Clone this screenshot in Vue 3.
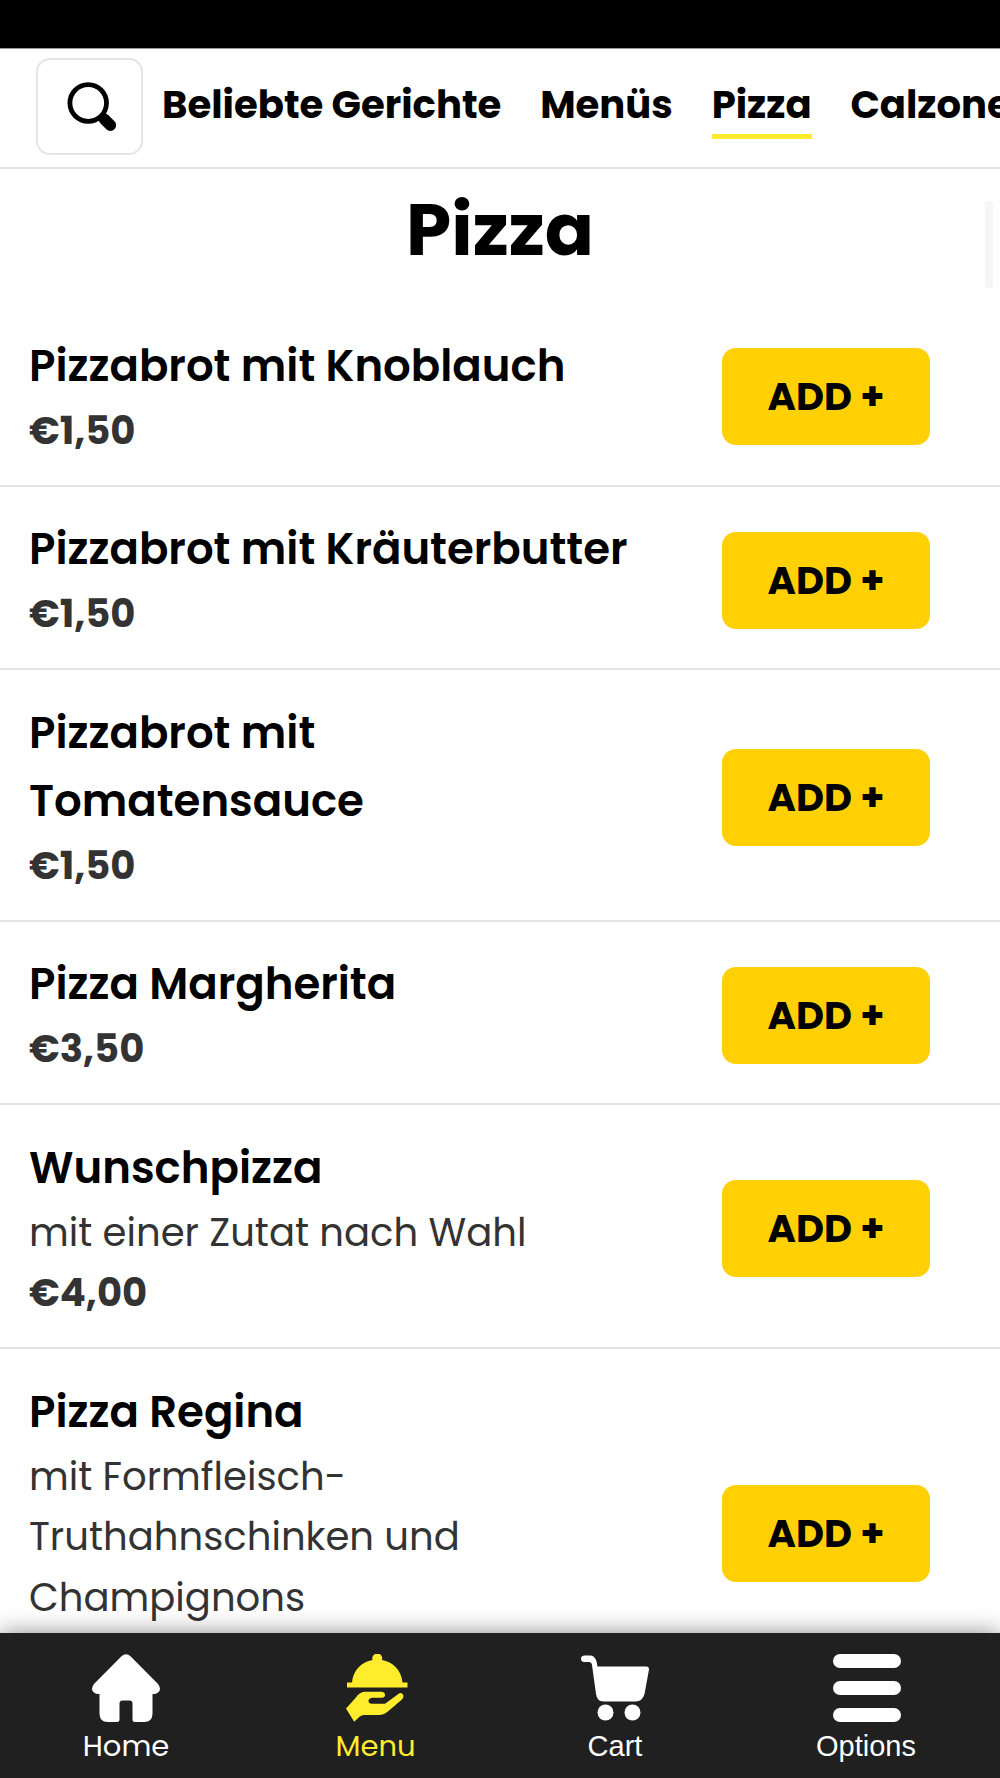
<script setup>

import { ref } from 'vue';

/**
 * The menu categories.
 */
const categories = [
    { id: 'popular', name: 'Beliebte Gerichte' },
    { id: 'menus', name: 'Menüs' },
    { id: 'pizza', name: 'Pizza' },
    { id: 'calzone', name: 'Calzone' },
];

/**
 * The selected category.
 */
const activeCategory = ref('pizza');

/**
 * The dishes of the selected category.
 */
const dishes = [
    { name: 'Pizzabrot mit Knoblauch', price: '€1,50' },
    { name: 'Pizzabrot mit Kräuterbutter', price: '€1,50' },
    { name: 'Pizzabrot mit Tomatensauce', price: '€1,50' },
    { name: 'Pizza Margherita', price: '€3,50' },
    { name: 'Wunschpizza', description: 'mit einer Zutat nach Wahl', price: '€4,00' },
    { name: 'Pizza Regina', description: 'mit Formfleisch-Truthahnschinken und Champignons', price: '€4,50' },
];

/**
 * The number of dishes in the cart.
 */
const cartCount = ref(0);

function add() {
    cartCount.value++;
}

</script>

<template>
    <div class="app">
        <div class="statusBar"></div>

        <header class="header">
            <button class="searchButton" aria-label="Suche">
                <svg width="50" height="50" viewBox="0 0 50 50">
                    <circle cx="21.2" cy="21" r="18.3" fill="none" stroke="#000" stroke-width="4.8" />
                    <path d="M37.2 37L43.4 43.2" stroke="#000" stroke-width="11.5" stroke-linecap="round" />
                </svg>
            </button>
            <nav class="tabs">
                <a v-for="category in categories" :key="category.id" class="tab" :class="{ active: activeCategory === category.id }" @click="activeCategory = category.id">{{ category.name }}</a>
            </nav>
        </header>

        <main class="content">
            <h1>Pizza</h1>
            <div class="scrollThumb"></div>

            <article v-for="dish in dishes" :key="dish.name" class="dish">
                <div class="dishText">
                    <h2>{{ dish.name }}</h2>
                    <p v-if="dish.description">{{ dish.description }}</p>
                    <strong>{{ dish.price }}</strong>
                </div>
                <button class="addButton" @click="add">ADD +</button>
            </article>
        </main>

        <footer class="bottomBar">
            <a class="navItem home">
                <svg width="68" height="68" viewBox="0 0 68 68" fill="currentColor">
                    <path d="M29.5 2.3Q34-1.8 38.5 2.3L66 30Q70 35 66 38.5Q64 40.3 60.5 40V60Q60 68 52.5 68H43Q40.5 68 40.5 65.5V49.5Q40.5 46.5 37.5 46.5H30.5Q27.5 46.5 27.5 49.5V65.5Q27.5 68 25 68H15.5Q8 68 7.5 60V40Q4 40.3 2 38.5Q-2 35 2 30Z" />
                </svg>
                <span>Home</span>
            </a>
            <a class="navItem menu">
                <svg width="62" height="68" viewBox="0 0 62 68" fill="currentColor">
                    <path d="M1 28.5H6C7 16 16 7.5 26.5 6A5 5 0 1 1 36 6C46.5 7.5 55.5 16 56.5 28.5H61.5V33.5H1Z" />
                    <path d="M0 54.5L9.5 44Q13.5 38 18.5 37.8H36Q39 38.3 39 41Q39 43.5 36 43.8H26Q22.5 44.5 22.5 47Q22.5 49.5 26 49.8H39L53 39.5Q55.5 38.3 57.2 40.8Q58.2 43 56.2 45.2L42.5 57Q38 61 33 61H18Q15.5 61 13.5 62.8L8.2 67.8Z" />
                </svg>
                <span>Menu</span>
            </a>
            <a class="navItem cart">
                <svg width="68" height="68" viewBox="0 0 68 68" fill="currentColor">
                    <path d="M3 1.5H10Q15.5 2.5 16.5 12.5H65.5Q68 12.5 68 15.5L63.5 40Q61.5 47.5 54.5 47.5H22.5Q16 47.5 15 40L11 11Q10.5 8 8 8H3Q0 7.5 0 4.7Q0 2 3 1.5Z" />
                    <circle cx="24.5" cy="58.5" r="8" />
                    <circle cx="51.5" cy="58.5" r="8" />
                </svg>
                <span>Cart</span>
            </a>
            <a class="navItem options">
                <svg width="68" height="68" viewBox="0 0 68 68" fill="currentColor">
                    <rect y="0" width="68" height="14" rx="7" />
                    <rect y="27" width="68" height="14" rx="7" />
                    <rect y="54" width="68" height="14" rx="7" />
                </svg>
                <span>Options</span>
            </a>
        </footer>
    </div>
</template>

<style>
    body {
        margin: 0;
        background: #fff;
    }
</style>

<style scoped>
    .app {
        display: flex;
        flex-direction: column;
        width: 1000px;
        height: 1778px;
        overflow: hidden;
        background: #fff;
        color: #000;
        font-family: Poppins, Inter, "Liberation Sans", sans-serif;
    }

    .app * {
        box-sizing: border-box;
    }

    .statusBar {
        flex: none;
        height: 49px;
        border-bottom: 1px solid #999;
        background: #000;
    }

    .header {
        display: flex;
        flex: none;
        align-items: flex-start;
        height: 120px;
        padding: 9px 0 0 36px;
        border-bottom: 2px solid #e3e3e3;
    }

    .searchButton {
        display: flex;
        flex: none;
        align-items: flex-start;
        width: 107px;
        height: 97px;
        padding: 22px 0 0 29px;
        border: 2px solid #e5e5e5;
        border-radius: 14px;
        background: #fff;
    }

    .tabs {
        display: flex;
        gap: 38.8px;
        margin-left: 19px;
    }

    .tab {
        flex: none;
        height: 81px;
        padding-top: 17px;
        font-size: 38.6px;
        font-weight: 700;
        line-height: 60px;
        white-space: nowrap;
    }

    .tab.active {
        border-bottom: 5px solid #ffec2d;
    }

    .content {
        position: relative;
        flex: 1;
        min-height: 0;
        overflow: hidden;
    }

    h1 {
        height: 134.6px;
        margin: 0;
        padding-top: 11px;
        font-size: 72.5px;
        font-weight: 700;
        line-height: 100px;
        text-align: center;
    }

    .scrollThumb {
        position: absolute;
        top: 32px;
        right: 7px;
        width: 8px;
        height: 87px;
        border-radius: 4px;
        background: #f6f6f6;
    }

    .dish {
        display: flex;
        align-items: center;
        justify-content: space-between;
        padding: 28.5px 70px 23.4px 29px;
        border-bottom: 2px solid #e3e3e3;
    }

    .dishText {
        width: 610px;
    }

    .dish h2 {
        max-width: 600px;
        margin: 0 0 1px;
        font-size: 43.45px;
        font-weight: 600;
        line-height: 68px;
    }

    .dish p {
        max-width: 510px;
        margin: 0;
        color: #333;
        font-size: 38.6px;
        line-height: 60.5px;
    }

    .dish strong {
        display: block;
        color: #333;
        font-size: 38.6px;
        font-weight: 700;
        line-height: 60.5px;
    }

    .addButton {
        flex: none;
        width: 208px;
        height: 97px;
        padding: 0;
        border: 0;
        border-radius: 14px;
        background: #ffd004;
        color: #000;
        font-family: inherit;
        font-size: 38.6px;
        font-weight: 700;
    }

    .bottomBar {
        position: relative;
        display: grid;
        flex: none;
        grid-template-columns: 252px 247px 232px 270px;
        height: 145px;
        background: #202020;
        box-shadow: 0 0 22px rgba(0, 0, 0, 0.45);
    }

    .navItem {
        display: flex;
        flex-direction: column;
        align-items: center;
        padding-top: 21px;
        color: #fff;
        font-size: 29px;
        line-height: 40px;
    }

    .navItem span {
        margin-top: 4px;
    }

    .navItem.menu {
        color: #ffec2d;
    }

    .navItem.menu svg {
        margin-left: 2px;
    }

    .navItem.options svg {
        margin-left: 2px;
    }

    .cart,
    .options {
        font-family: "Liberation Sans", sans-serif;
    }
</style>
